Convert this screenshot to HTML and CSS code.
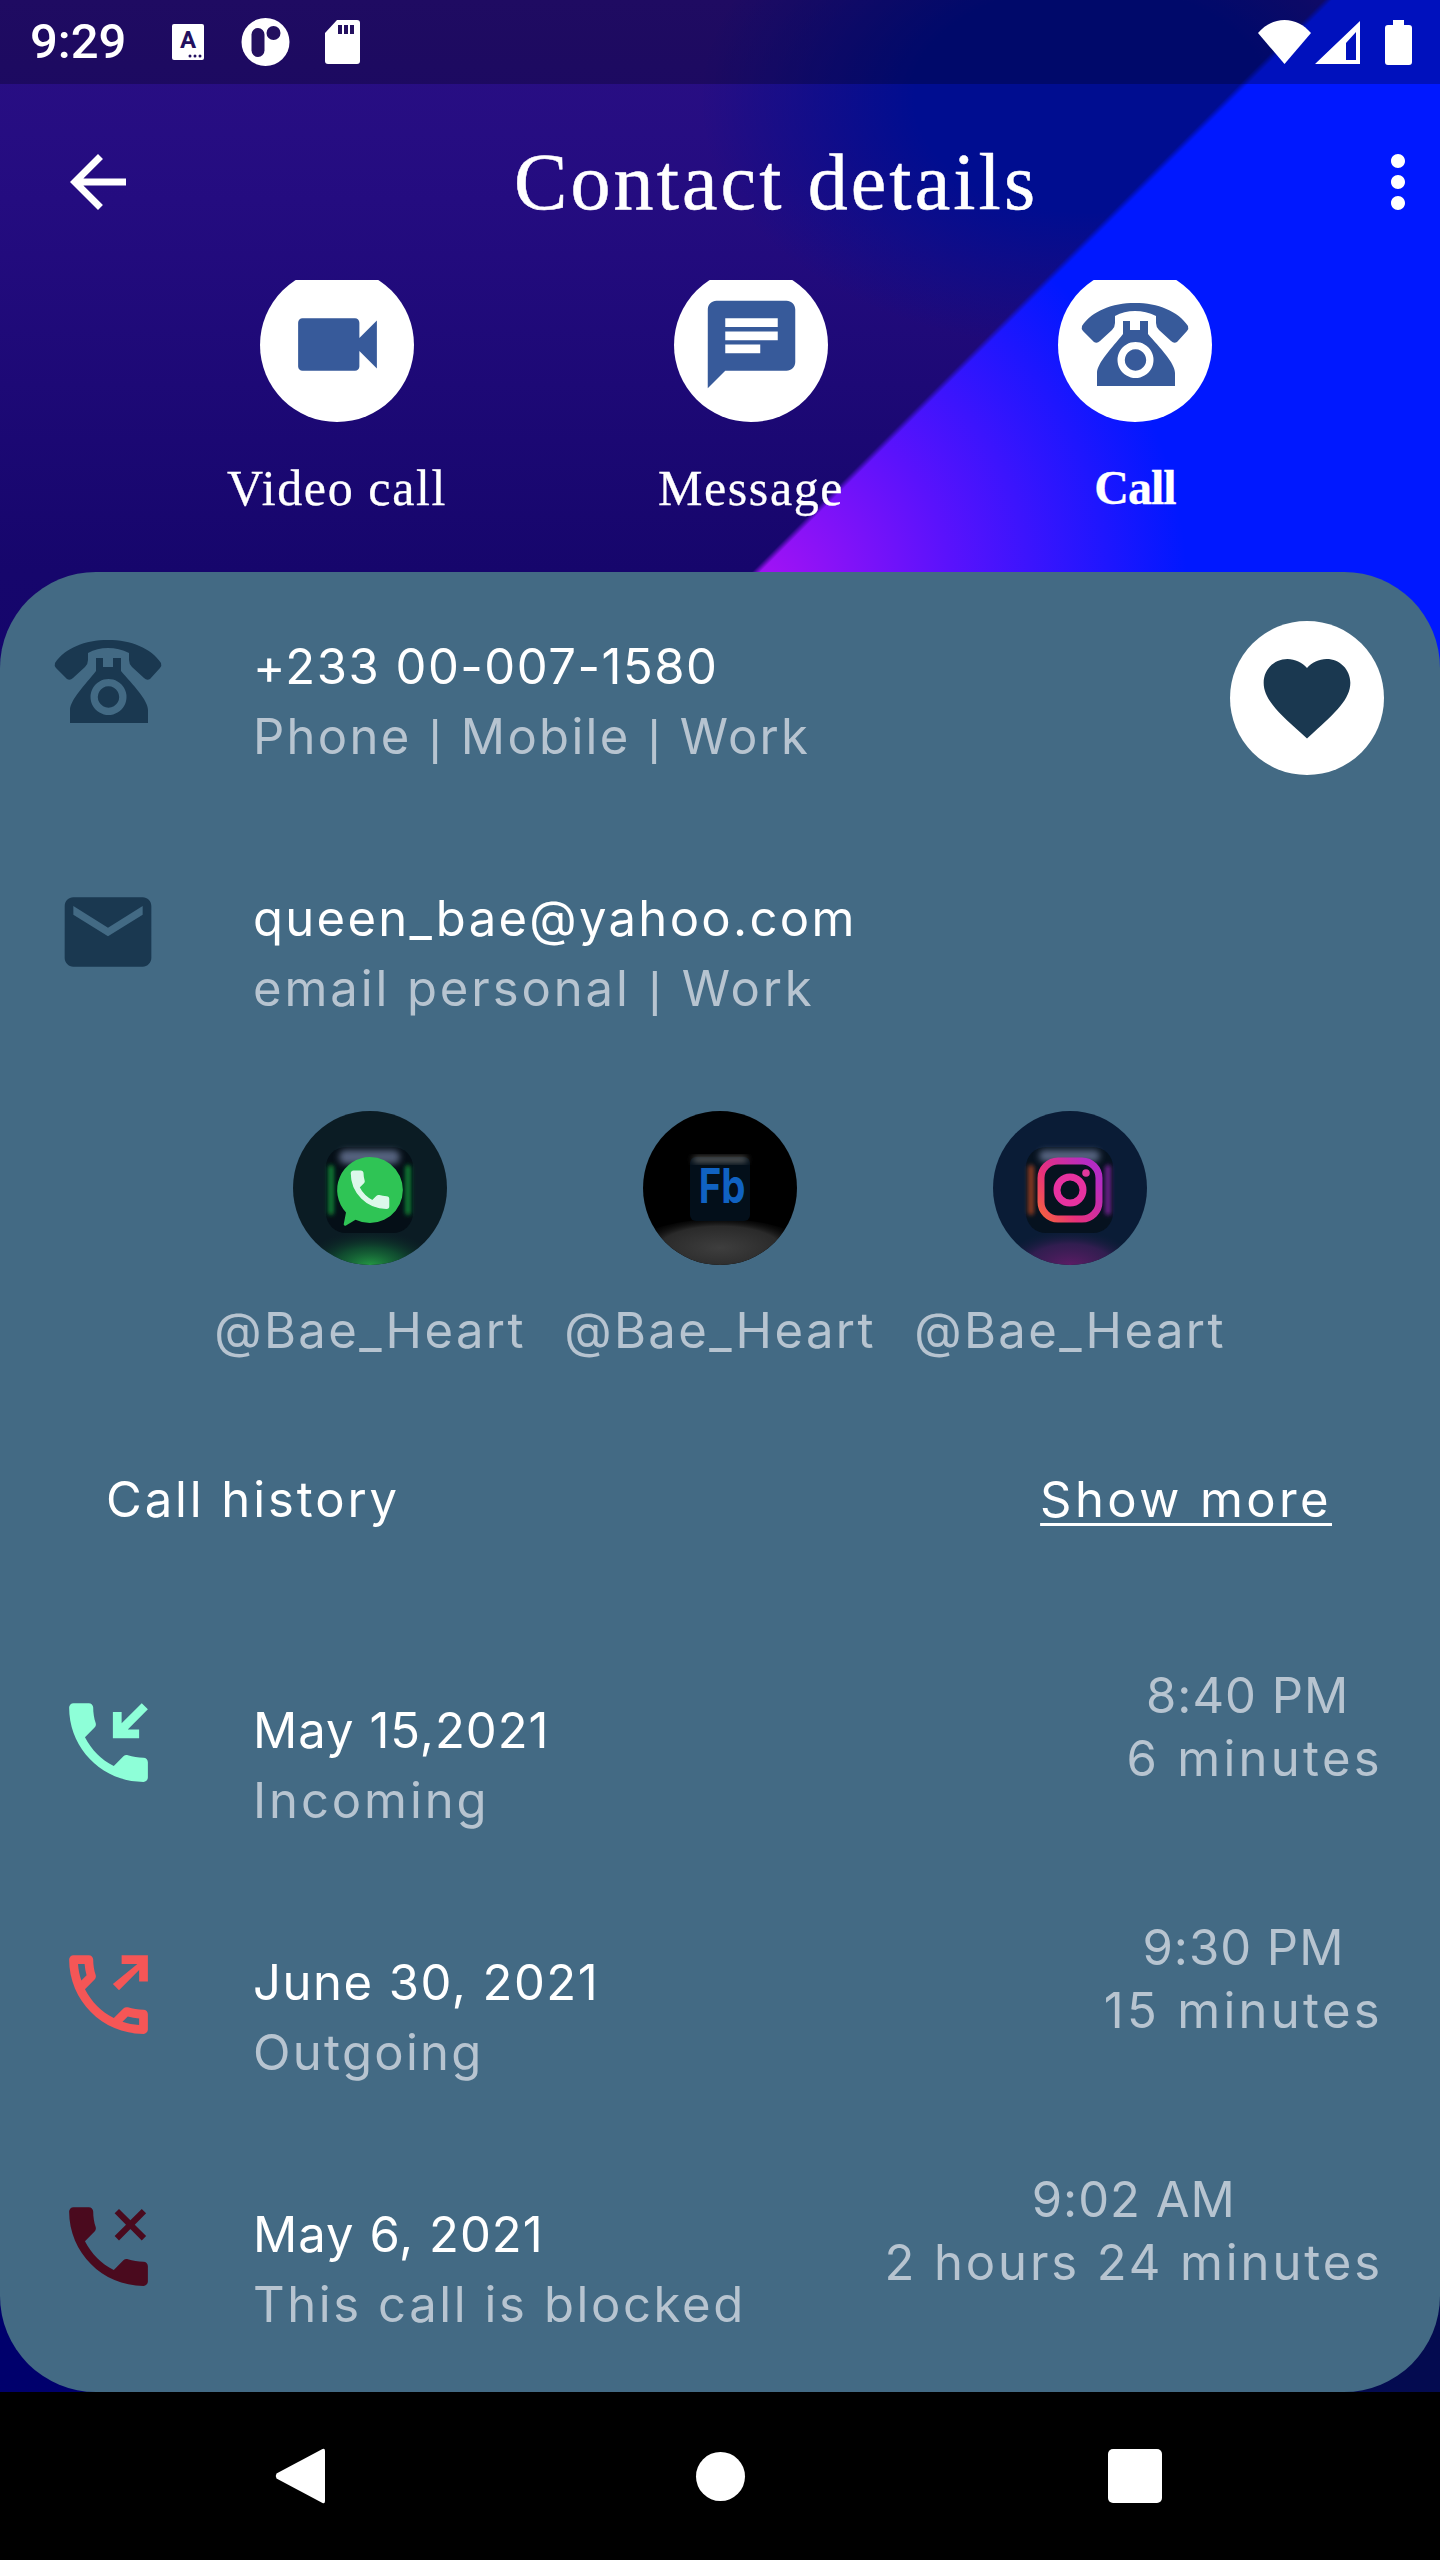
FILE: index.html
```html
<!DOCTYPE html>
<html lang="en">
<head>
<meta charset="utf-8">
<title>Contact details</title>
<link rel="stylesheet" href="styles.css">
</head>
<body>
<svg class="defs" width="0" height="0" aria-hidden="true">
  <defs>
    <symbol id="rotary" viewBox="-1 0 108 83">
      <path d="M0 23C10 8 30 0 53 0S96 8 106 23Q107 26 105 28L95 39Q92 41 89 38L77 27Q74 24 74 20V13Q64 8 53 8T33 13V20Q33 24 30 27L18 38Q15 41 12 39L1 28Q-1 26 0 23Z"/>
      <path fill-rule="evenodd" d="M41 18H48V27H58V18H66V31C78 45 93 60 93 70V83H15V70C15 60 30 45 41 31ZM53.5 39a18 18 0 1 0 .01 0ZM53.5 46.300a10.700 10.700 0 1 1-.01 0Z"/>
    </symbol>
    <symbol id="handset" viewBox="0 0 24 24">
      <path d="M20 15.500c-1.250 0-2.450-.2-3.570-.57-.35-.11-.74-.03-1.020.24l-2.200 2.200c-2.830-1.440-5.150-3.750-6.590-6.590l2.200-2.210c.28-.26.36-.65.25-1C8.700 6.450 8.500 5.250 8.500 4c0-.55-.45-1-1-1H4c-.55 0-1 .45-1 1 0 9.390 7.610 17 17 17 .55 0 1-.45 1-1v-3.500c0-.55-.45-1-1-1z"/>
    </symbol>
    <filter id="soft" x="-100%" y="-20%" width="300%" height="140%"><feGaussianBlur stdDeviation="2.200"/></filter>
    <filter id="softer" x="-20%" y="-60%" width="140%" height="220%"><feGaussianBlur stdDeviation="3"/></filter>
    <linearGradient id="igGrad" x1="0" y1="1" x2="1" y2="0.300">
      <stop offset="0" stop-color="#f5643c"/>
      <stop offset="0.400" stop-color="#e8307c"/>
      <stop offset="1" stop-color="#b52cc4"/>
    </linearGradient>
    <radialGradient id="glowGreen" cx="0.500" cy="0.620" r="0.620">
      <stop offset="0" stop-color="#259c45"/>
      <stop offset="0.500" stop-color="#125e34" stop-opacity="0.700"/>
      <stop offset="1" stop-color="#0b1c24" stop-opacity="0"/>
    </radialGradient>
    <radialGradient id="glowGrey" cx="0.500" cy="0.450" r="0.520">
      <stop offset="0" stop-color="#3e3e3e"/>
      <stop offset="0.650" stop-color="#2a2a2a"/>
      <stop offset="1" stop-color="#000" stop-opacity="0"/>
    </radialGradient>
    <radialGradient id="glowIg" cx="0.500" cy="0.620" r="0.620">
      <stop offset="0" stop-color="#5e1c66"/>
      <stop offset="0.600" stop-color="#3e1e58" stop-opacity="0.750"/>
      <stop offset="1" stop-color="#0a1c36" stop-opacity="0"/>
    </radialGradient>
  </defs>
</svg>

<main class="screen">
  <header class="status">
    <span class="time">9:29</span>
    <svg class="st-a" viewBox="0 0 32 36">
      <rect width="32" height="36" rx="2" fill="#fff"/>
      <text class="st-a-letter" x="16" y="24" text-anchor="middle">A</text>
      <circle cx="18" cy="32" r="1.500" class="st-dark"/><circle cx="23" cy="32" r="1.500" class="st-dark"/><circle cx="28" cy="32" r="1.500" class="st-dark"/>
    </svg>
    <svg class="st-circle" viewBox="0 0 48 48">
      <circle cx="24" cy="24" r="24" fill="#fff"/>
      <rect x="10" y="10" width="13" height="29" rx="6.500" class="st-dark"/>
      <circle cx="32" cy="15" r="7" class="st-dark"/>
    </svg>
    <svg class="st-sd" viewBox="0 0 35 44">
      <path fill="#fff" fill-rule="evenodd" d="M12 0H32Q35 0 35 3V41Q35 44 32 44H3Q0 44 0 41V13Z"/>
      <rect x="13" y="5" width="4" height="9" class="st-dark"/><rect x="19" y="5" width="4" height="9" class="st-dark"/><rect x="25" y="5" width="4" height="9" class="st-dark"/>
    </svg>
    <span class="status-fill"></span>
    <svg class="st-wifi" viewBox="0 0 53 44"><path fill="#fff" d="M0 13C7 5 16 0 26.500 0S46 5 53 13L26.500 44Z"/></svg>
    <svg class="st-signal" viewBox="0 0 45 43"><path fill="#fff" fill-rule="evenodd" d="M0 43 45 0V43ZM31 22 41 11V39H31Z"/></svg>
    <svg class="st-battery" viewBox="0 0 27 45"><path fill="#fff" d="M8 0H19V5H24Q27 5 27 8V42Q27 45 24 45H3Q0 45 0 42V8Q0 5 3 5H8Z"/></svg>
  </header>

  <div class="appbar">
    <svg class="bar-icon" viewBox="0 0 24 24"><path d="M20 11H7.830l5.590-5.590L12 4l-8 8 8 8 1.410-1.410L7.830 13H20v-2z"/></svg>
    <h1 class="title">Contact details</h1>
    <svg class="bar-icon bar-more" viewBox="0 0 24 24"><path d="M12 8c1.100 0 2-.9 2-2s-.9-2-2-2-2 .9-2 2 .9 2 2 2zm0 2c-1.100 0-2 .9-2 2s.9 2 2 2 2-.9 2-2-.9-2-2-2zm0 6c-1.100 0-2 .9-2 2s.9 2 2 2 2-.9 2-2-.9-2-2-2z"/></svg>
  </div>

  <nav class="actions">
    <div class="action">
      <div class="action-clip"><div class="action-disc">
        <svg class="action-icon" viewBox="0 0 24 24"><path d="M17 10.500V7c0-.55-.45-1-1-1H4c-.55 0-1 .45-1 1v10c0 .55.45 1 1 1h12c.55 0 1-.45 1-1v-3.500l4 4v-11l-4 4z"/></svg>
      </div></div>
      <span class="action-label">Video call</span>
    </div>
    <div class="action">
      <div class="action-clip"><div class="action-disc">
        <svg class="action-icon" viewBox="0 0 24 24"><path d="M20 2H4c-1.100 0-1.990.9-1.990 2L2 22l4-4h14c1.100 0 2-.9 2-2V4c0-1.100-.9-2-2-2zM14 14H6v-2h8v2zm4-3H6V9h12v2zm0-3H6V6h12v2z"/></svg>
      </div></div>
      <span class="action-label">Message</span>
    </div>
    <div class="action">
      <div class="action-clip"><div class="action-disc">
        <svg class="action-phone"><use href="#rotary"/></svg>
      </div></div>
      <span class="action-label action-label-on">Call</span>
    </div>
  </nav>

  <section class="card">
    <div class="row row-contact">
      <div class="gutter"><svg class="phone-icon"><use href="#rotary"/></svg></div>
      <div class="lines">
        <div class="primary t-num">+233 00-007-1580</div>
        <div class="secondary t-med">Phone <span class="pipe">|</span> Mobile <span class="pipe">|</span> Work</div>
      </div>
      <div class="fav">
        <svg class="fav-icon" viewBox="0 0 24 24"><path d="M12 21.350l-1.450-1.320C5.400 15.360 2 12.280 2 8.500 2 5.420 4.420 3 7.500 3c1.740 0 3.410.81 4.500 2.090C13.090 3.810 14.760 3 16.500 3 19.580 3 22 5.420 22 8.500c0 3.780-3.400 6.860-8.550 11.540L12 21.350z"/></svg>
      </div>
    </div>

    <div class="row row-email">
      <div class="gutter"><svg class="mail-icon" viewBox="0 0 24 24"><path d="M20 4H4c-1.100 0-1.990.9-1.990 2L2 18c0 1.100.9 2 2 2h16c1.100 0 2-.9 2-2V6c0-1.100-.9-2-2-2zm0 4l-8 5-8-5V6l8 5 8-5v2z"/></svg></div>
      <div class="lines">
        <div class="primary t-med">queen_bae@yahoo.com</div>
        <div class="secondary t-wide">email personal <span class="pipe">|</span> Work</div>
      </div>
    </div>

    <div class="socials">
      <div class="social">
        <svg class="social-img" viewBox="0 0 154 154">
          <circle cx="77" cy="77" r="77" fill="#0b1c24"/>
          <clipPath id="clipA"><circle cx="77" cy="77" r="77"/></clipPath>
          <g clip-path="url(#clipA)">
            <ellipse cx="77" cy="148" rx="58" ry="30" fill="url(#glowGreen)"/>
            <rect x="33" y="36" width="87" height="86" rx="20" fill="#050f17"/>
            <rect x="35" y="54" width="6" height="50" rx="3" fill="#117a30" filter="url(#soft)"/>
            <rect x="112" y="54" width="6" height="50" rx="3" fill="#117a30" filter="url(#soft)"/>
            <rect x="46" y="39" width="61" height="14" rx="7" fill="#55627e" filter="url(#softer)"/>
            <path fill="#2fc455" d="M77 46a33 33 0 1 1-14.500 62.700L53 114.500a1.500 1.500 0 0 1-2.300-1.300L53 101.500A33 33 0 0 1 77 46Z"/>
            <g transform="translate(52.300 54) scale(2.060)" fill="#dcf8ea" stroke="#dcf8ea" stroke-width="0.700" stroke-linejoin="round"><use href="#handset" width="24" height="24"/></g>
          </g>
        </svg>
        <span class="handle">@Bae_Heart</span>
      </div>
      <div class="social">
        <svg class="social-img" viewBox="0 0 154 154">
          <clipPath id="clipB"><circle cx="77" cy="77" r="77"/></clipPath>
          <circle cx="77" cy="77" r="77" fill="#000"/>
          <g clip-path="url(#clipB)">
            <ellipse cx="77" cy="140" rx="90" ry="32" fill="url(#glowGrey)"/>
            <rect x="47" y="46" width="60" height="64" rx="6" fill="#030f1a"/>
            <rect x="50" y="46" width="54" height="5" rx="2.500" fill="#6a6a68" filter="url(#softer)"/>
            <text class="fb-text" text-anchor="middle" transform="translate(79 92) scale(.8 1)">Fb</text>
          </g>
        </svg>
        <span class="handle">@Bae_Heart</span>
      </div>
      <div class="social">
        <svg class="social-img" viewBox="0 0 154 154">
          <clipPath id="clipC"><circle cx="77" cy="77" r="77"/></clipPath>
          <circle cx="77" cy="77" r="77" fill="#0a1c36"/>
          <g clip-path="url(#clipC)">
            <ellipse cx="77" cy="148" rx="58" ry="30" fill="url(#glowIg)"/>
            <rect x="33" y="36" width="87" height="86" rx="20" fill="#06121f"/>
            <rect x="35" y="54" width="6" height="50" rx="3" fill="#8a3a22" filter="url(#soft)"/>
            <rect x="112" y="54" width="6" height="50" rx="3" fill="#6a2088" filter="url(#soft)"/>
            <rect x="46" y="39" width="61" height="12" rx="6" fill="#55627e" filter="url(#softer)"/>
            <rect x="48" y="50" width="58" height="58" rx="17" fill="#06121f" stroke="url(#igGrad)" stroke-width="7"/>
            <circle cx="77" cy="79" r="13" fill="none" stroke="#e632a0" stroke-width="7"/>
            <circle cx="93" cy="62" r="3.800" fill="#e0389c"/>
          </g>
        </svg>
        <span class="handle">@Bae_Heart</span>
      </div>
    </div>

    <div class="history-head">
      <span class="primary t-wide">Call history</span>
      <a class="more" href="#">Show more</a>
    </div>

    <div class="row call">
      <div class="gutter">
        <svg class="call-icon call-in" viewBox="0 0 24 24"><use href="#handset" width="24" height="24"/><path d="M19.600 3 15 7.600V5h-2v6h6V9h-2.600L21 4.400z"/></svg>
      </div>
      <div class="lines">
        <div class="primary t-tight">May 15,2021</div>
        <div class="secondary t-wide">Incoming</div>
      </div>
      <div class="when">
        <div class="t-tight when-lead">8:40 PM</div>
        <div class="t-xwide">6 minutes</div>
      </div>
    </div>

    <div class="row call">
      <div class="gutter">
        <svg class="call-icon call-out" viewBox="0 0 24 24"><path d="M6.540 5c.06.89.21 1.760.45 2.590l-1.200 1.200c-.41-1.200-.67-2.470-.76-3.790h1.510m9.860 12.020c.85.24 1.720.39 2.600.45v1.500c-1.320-.09-2.590-.35-3.800-.75l1.200-1.200M7.500 3H4c-.55 0-1 .45-1 1 0 9.390 7.610 17 17 17 .55 0 1-.45 1-1v-3.490c0-.55-.45-1-1-1-1.240 0-2.450-.2-3.570-.57-.1-.04-.21-.05-.31-.05-.26 0-.51.1-.71.29l-2.200 2.200c-2.830-1.450-5.150-3.760-6.590-6.590l2.200-2.200c.28-.28.36-.67.25-1.020C8.700 6.450 8.500 5.250 8.500 4c0-.55-.45-1-1-1z"/><path d="M15 3v2h3.600L13 9.600 14.400 11 19 6.400V9h2V3z"/></svg>
      </div>
      <div class="lines">
        <div class="primary t-num">June 30, 2021</div>
        <div class="secondary t-med">Outgoing</div>
      </div>
      <div class="when">
        <div class="t-tight">9:30 PM</div>
        <div class="t-xwide">15 minutes</div>
      </div>
    </div>

    <div class="row call">
      <div class="gutter">
        <svg class="call-icon call-block" viewBox="0 0 24 24"><use href="#handset" width="24" height="24"/><path d="M14.400 3.400 17 6l2.600-2.600 1 1L18 7l2.600 2.600-1 1L17 8l-2.600 2.600-1-1L16 7l-2.600-2.600z"/></svg>
      </div>
      <div class="lines">
        <div class="primary t-tight">May 6, 2021</div>
        <div class="secondary t-fit">This call is blocked</div>
      </div>
      <div class="when">
        <div class="t-tight">9:02 AM</div>
        <div class="t-wide">2 hours 24 minutes</div>
      </div>
    </div>
  </section>

  <footer class="navbar">
    <svg class="nav-back" viewBox="0 0 50 56"><path fill="#fff" d="M50 3V53Q50 56 47.500 55L1.500 30.500Q0 28 1.500 25.500L47.500 1Q50 0 50 3Z"/></svg>
    <span class="nav-home"></span>
    <span class="nav-recent"></span>
  </footer>
</main>
</body>
</html>
```

FILE: styles.css
```css
* { box-sizing: border-box; }
html, body { margin: 0; padding: 0; }
body { background: #000; font-family: "Inter", "Noto Sans", sans-serif; color: #fff; }
.defs { position: absolute; }

.screen {
  position: relative;
  width: 1440px;
  height: 2560px;
  display: flex;
  flex-direction: column;
  overflow: hidden;
  background:
    radial-gradient(260px 260px at 100% 2392px, #040b50 60%, rgba(4, 11, 80, 0)),
    radial-gradient(ellipse 390px 250px at 1090px 100px, #000d90 45%, rgba(0, 13, 144, 0) 100%),
    linear-gradient(180deg, #2a0f85 0, #240c80 200px, #16066c 570px, #00006c 2300px);
}
.screen::before {
  content: "";
  position: absolute;
  top: 0;
  left: 0;
  width: 100%;
  height: 720px;
  background:
    radial-gradient(circle 430px at 757px 590px, #a812f4 0, #5a12fc 45%, rgba(10, 24, 255, 0) 100%),
    #0018ff;
  -webkit-mask-image: linear-gradient(135deg, transparent 936px, #000 942px);
  mask-image: linear-gradient(135deg, transparent 936px, #000 942px);
}
.screen > * { position: relative; }

/* status bar */
.status {
  height: 84px;
  padding: 0 28px 0 30px;
  display: flex;
  align-items: center;
  background: rgba(0, 0, 0, 0.26);
}
.time { font: 500 49px/84px "Roboto", sans-serif; width: 93px; white-space: nowrap; }
.st-a { width: 32px; height: 36px; margin-left: 49px; }
.st-a-letter { font: 700 24px "Roboto", sans-serif; fill: #23105f; }
.st-dark { fill: #23105f; }
.st-circle { width: 49px; height: 48px; margin-left: 37px; }
.st-sd { width: 35px; height: 44px; margin-left: 35px; }
.status-fill { flex: 1; }
.st-wifi { width: 53px; height: 44px; }
.st-signal { width: 45px; height: 43px; margin-left: 4px; }
.st-battery { width: 27px; height: 45px; margin-left: 25px; }

/* app bar */
.appbar {
  height: 84px;
  margin-top: 56px;
  padding-left: 56px;
  display: flex;
  align-items: center;
}
.bar-icon { width: 84px; height: 84px; fill: #fff; flex: none; }
.bar-more { margin-left: auto; }
.title {
  margin: 0 0 0 374px;
  font: 400 80px/84px "Liberation Serif", serif;
  letter-spacing: 3.1px;
  -webkit-text-stroke: 0.5px #fff;
  white-space: nowrap;
}

/* actions */
.actions {
  height: 292px;
  margin-top: 56px;
  padding-left: 130px;
  display: grid;
  grid-template-columns: 414px 414px 354px;
  align-content: start;
}
.action { display: flex; flex-direction: column; align-items: center; }
.action-clip { width: 154px; height: 142px; overflow: hidden; }
.action-disc {
  width: 154px;
  height: 154px;
  margin-top: -12px;
  border-radius: 50%;
  background: #fff;
  display: flex;
  align-items: center;
  justify-content: center;
}
.action-icon { width: 105px; height: 105px; fill: #375a9a; margin-bottom: 2px; }
.action-phone { width: 108px; height: 83px; fill: #375a9a; margin-bottom: 2px; }
.action-label {
  margin-top: 31px;
  font: 400 50px/70px "Liberation Serif", serif;
  letter-spacing: 1.6px;
  -webkit-text-stroke: 0.3px #fff;
  white-space: nowrap;
}
.action-label-on { font-weight: 700; font-size: 48px; letter-spacing: -1px; }

/* card */
.card {
  height: 1820px;
  padding-top: 60px;
  background: #436a84;
  border-radius: 96px;
  display: flex;
  flex-direction: column;
}
.row { display: flex; padding: 0 60px 0 56px; height: 140px; flex: none; }
.gutter { width: 197px; flex: none; }
.primary, .secondary, .handle, .more, .when { font-size: 49px; white-space: nowrap; }
.primary, .secondary { line-height: 70px; }
.primary { color: #fff; }
.secondary { color: #b7c4d0; }
.lines { flex: none; }
.pipe { font-family: "Liberation Sans", sans-serif; font-weight: 400; margin: 0 1px; }

/* letter fit: the wide letterforms of the original face */
.t-tight { letter-spacing: 1px; }
.t-num { letter-spacing: 1.5px; }
.t-med { letter-spacing: 2.3px; }
.t-fit { letter-spacing: 2.6px; }
.t-wide { letter-spacing: 2.9px; }
.t-xwide { letter-spacing: 3.3px; }

.phone-icon { width: 108px; height: 83px; margin: 8px 0 0 -2px; fill: #1a3850; display: block; }
.mail-icon { width: 104px; height: 104px; margin-top: -4px; fill: #1a3850; display: block; }

.fav {
  width: 154px;
  height: 154px;
  margin: -11px -4px 0 auto;
  border-radius: 50%;
  background: #fff;
  display: flex;
  align-items: center;
  justify-content: center;
}
.fav-icon { width: 104px; height: 104px; fill: #1a3850; }

.row-email { margin-top: 112px; }

.socials {
  margin-top: 87px;
  padding-left: 195px;
  display: grid;
  grid-template-columns: repeat(3, 350px);
}
.social { display: flex; flex-direction: column; align-items: center; }
.social-img { width: 154px; height: 154px; display: block; }
.fb-text { font: 700 48px "Inter", sans-serif; fill: #1062c2; }
.handle {
  margin-top: 31px;
  line-height: 70px;
  letter-spacing: 2.4px;
  color: #b7c4d0;
}

.history-head {
  margin-top: 99px;
  padding: 0 108px 0 106px;
  display: flex;
  justify-content: space-between;
}
.more {
  line-height: 70px;
  letter-spacing: 3.4px;
  color: #fff;
  text-decoration: underline;
  text-decoration-thickness: 3px;
  text-underline-offset: 6px;
}

.call { margin-top: 112px; }
.history-head + .call { margin-top: 161px; }
.call-icon { width: 105px; height: 105px; margin-top: -6px; display: block; }
.call-in { fill: #8effd8; }
.call-out { fill: #f55656; }
.call-block { fill: #4a0a1e; }
.when {
  margin: -32px -3px 0 auto;
  text-align: center;
  line-height: 63px;
  color: #b7c4d0;
}
.when-lead { padding-right: 14px; }

/* nav bar */
.navbar {
  height: 168px;
  padding-left: 90px;
  background: #000;
  display: grid;
  grid-template-columns: 420px 420px 410px;
  justify-items: center;
  align-items: center;
}
.nav-back { width: 50px; height: 56px; }
.nav-home { width: 49px; height: 49px; border-radius: 50%; background: #fff; }
.nav-recent { width: 54px; height: 54px; border-radius: 5px; background: #fff; }
```
